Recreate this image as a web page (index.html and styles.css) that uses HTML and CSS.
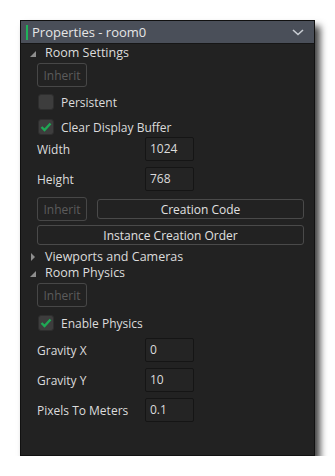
FILE: index.html
```html
<!DOCTYPE html>
<html>
<head>
    <meta charset="UTF-8">
    <title>Properties - room0</title>
    <link rel="stylesheet" href="styles.css">
</head>
<body>
    <div class="panel">
        <div class="panel-header">
            <span class="header-mark"></span>
            <span class="header-title">Properties - room0</span>
            <svg class="chevron" width="12" height="7" viewBox="0 0 12 7">
                <path d="M1 1 L6 5.5 L11 1" fill="none" stroke="#c8ccd2" stroke-width="1.6"/>
            </svg>
        </div>
        <div class="panel-body">
            <div class="section-title first"><span class="tri open"></span>Room Settings</div>
            <button class="btn inherit gap-2">Inherit</button>
            <div class="check-row mt-5"><span class="check"></span>Persistent</div>
            <div class="check-row mt-5"><span class="check on"><svg width="12" height="10" viewBox="0 0 12 10"><path d="M1.5 5 L4.5 8 L10.5 1.5" fill="none" stroke="#1fa855" stroke-width="2.4"/></svg></span>Clear Display Buffer</div>
            <div class="field-row"><span class="field-label">Width</span><span class="field-input">1024</span></div>
            <div class="field-row mt-6"><span class="field-label">Height</span><span class="field-input">768</span></div>
            <div class="btn-row mt-6">
                <button class="btn inherit">Inherit</button>
                <button class="btn wide">Creation Code</button>
            </div>
            <button class="btn full mt-4">Instance Creation Order</button>
            <div class="section-title mt-4"><span class="tri closed"></span>Viewports and Cameras</div>
            <div class="section-title"><span class="tri open"></span>Room Physics</div>
            <button class="btn inherit gap-2">Inherit</button>
            <div class="check-row mt-6"><span class="check on"><svg width="12" height="10" viewBox="0 0 12 10"><path d="M1.5 5 L4.5 8 L10.5 1.5" fill="none" stroke="#1fa855" stroke-width="2.4"/></svg></span>Enable Physics</div>
            <div class="field-row mt-5"><span class="field-label">Gravity X</span><span class="field-input">0</span></div>
            <div class="field-row mt-6"><span class="field-label">Gravity Y</span><span class="field-input">10</span></div>
            <div class="field-row mt-6"><span class="field-label">Pixels To Meters</span><span class="field-input">0.1</span></div>
        </div>
    </div>
</body>
</html>
```

FILE: styles.css
```css
body {
    margin: 0;
    background: #ffffff;
    font-family: 'Open Sans', 'Noto Sans', sans-serif;
    font-size: 12px;
    color: #dcdcdc;
}
.panel {
    margin: 20px 0 0 20px;
    width: 295px;
    height: 436px;
    box-sizing: border-box;
    background-color: #222222;
    border: 1px solid #111111;
    box-shadow: 5px 6px 7px rgba(0, 0, 0, 0.75);
    display: flex;
    flex-direction: column;
}
.panel-header {
    height: 23px;
    box-sizing: border-box;
    background-color: #4a4f59;
    border-bottom: 1px solid #161616;
    display: flex;
    align-items: center;
    padding: 0 10px 0 5px;
}
.header-mark {
    width: 2px;
    height: 15px;
    background-color: #1fb35a;
    margin-right: 4px;
}
.header-title {
    flex: 1;
    font-size: 13px;
    color: #e6e6e6;
}
.chevron {
    display: block;
}
.panel-body {
    padding: 1px 10px 0 16px;
    display: flex;
    flex-direction: column;
    align-items: flex-start;
}
.section-title {
    height: 16px;
    line-height: 16px;
    display: flex;
    align-items: center;
    position: relative;
    left: -8px;
    font-size: 12.5px;
}
.tri {
    width: 16px;
    height: 16px;
    position: relative;
    flex: none;
}
.tri.open::before {
    content: "";
    position: absolute;
    left: 1px;
    top: 6px;
    border-style: solid;
    border-width: 0 0 6px 6px;
    border-color: transparent transparent #8e8e8e transparent;
}
.tri.closed::before {
    content: "";
    position: absolute;
    left: 2px;
    top: 4px;
    border-style: solid;
    border-width: 4px 0 4px 4px;
    border-color: transparent transparent transparent #8e8e8e;
}
.btn {
    font-family: inherit;
    font-size: 12px;
    background: transparent;
    border: 1px solid #4a4a4a;
    border-radius: 3px;
    color: #e0e0e0;
    padding: 0;
    box-sizing: border-box;
}
.btn.inherit {
    width: 50px;
    height: 24px;
    color: #5c5c5c;
    border-color: #474747;
}
.btn-row {
    display: flex;
    align-items: center;
    gap: 10px;
    width: 267px;
}
.btn.wide {
    flex: 1;
    height: 20px;
}
.btn.full {
    width: 267px;
    height: 20px;
}
.check-row {
    height: 20px;
    display: flex;
    align-items: center;
    padding-left: 1px;
}
.check {
    width: 16px;
    height: 16px;
    box-sizing: border-box;
    background-color: #3d3d3d;
    border: 1px solid #2e2e2e;
    border-radius: 3px;
    margin-right: 7px;
    display: flex;
    align-items: center;
    justify-content: center;
}
.field-row {
    height: 24px;
    display: flex;
    align-items: center;
}
.field-label {
    width: 108px;
}
.field-input {
    width: 49px;
    height: 24px;
    box-sizing: border-box;
    border: 1px solid #151515;
    border-radius: 2px;
    background-color: #242424;
    padding-left: 4px;
    line-height: 22px;
}
.gap-2 { margin-top: 2px; }
.mt-4 { margin-top: 4px; }
.mt-5 { margin-top: 5px; }
.mt-6 { margin-top: 6px; }
```
